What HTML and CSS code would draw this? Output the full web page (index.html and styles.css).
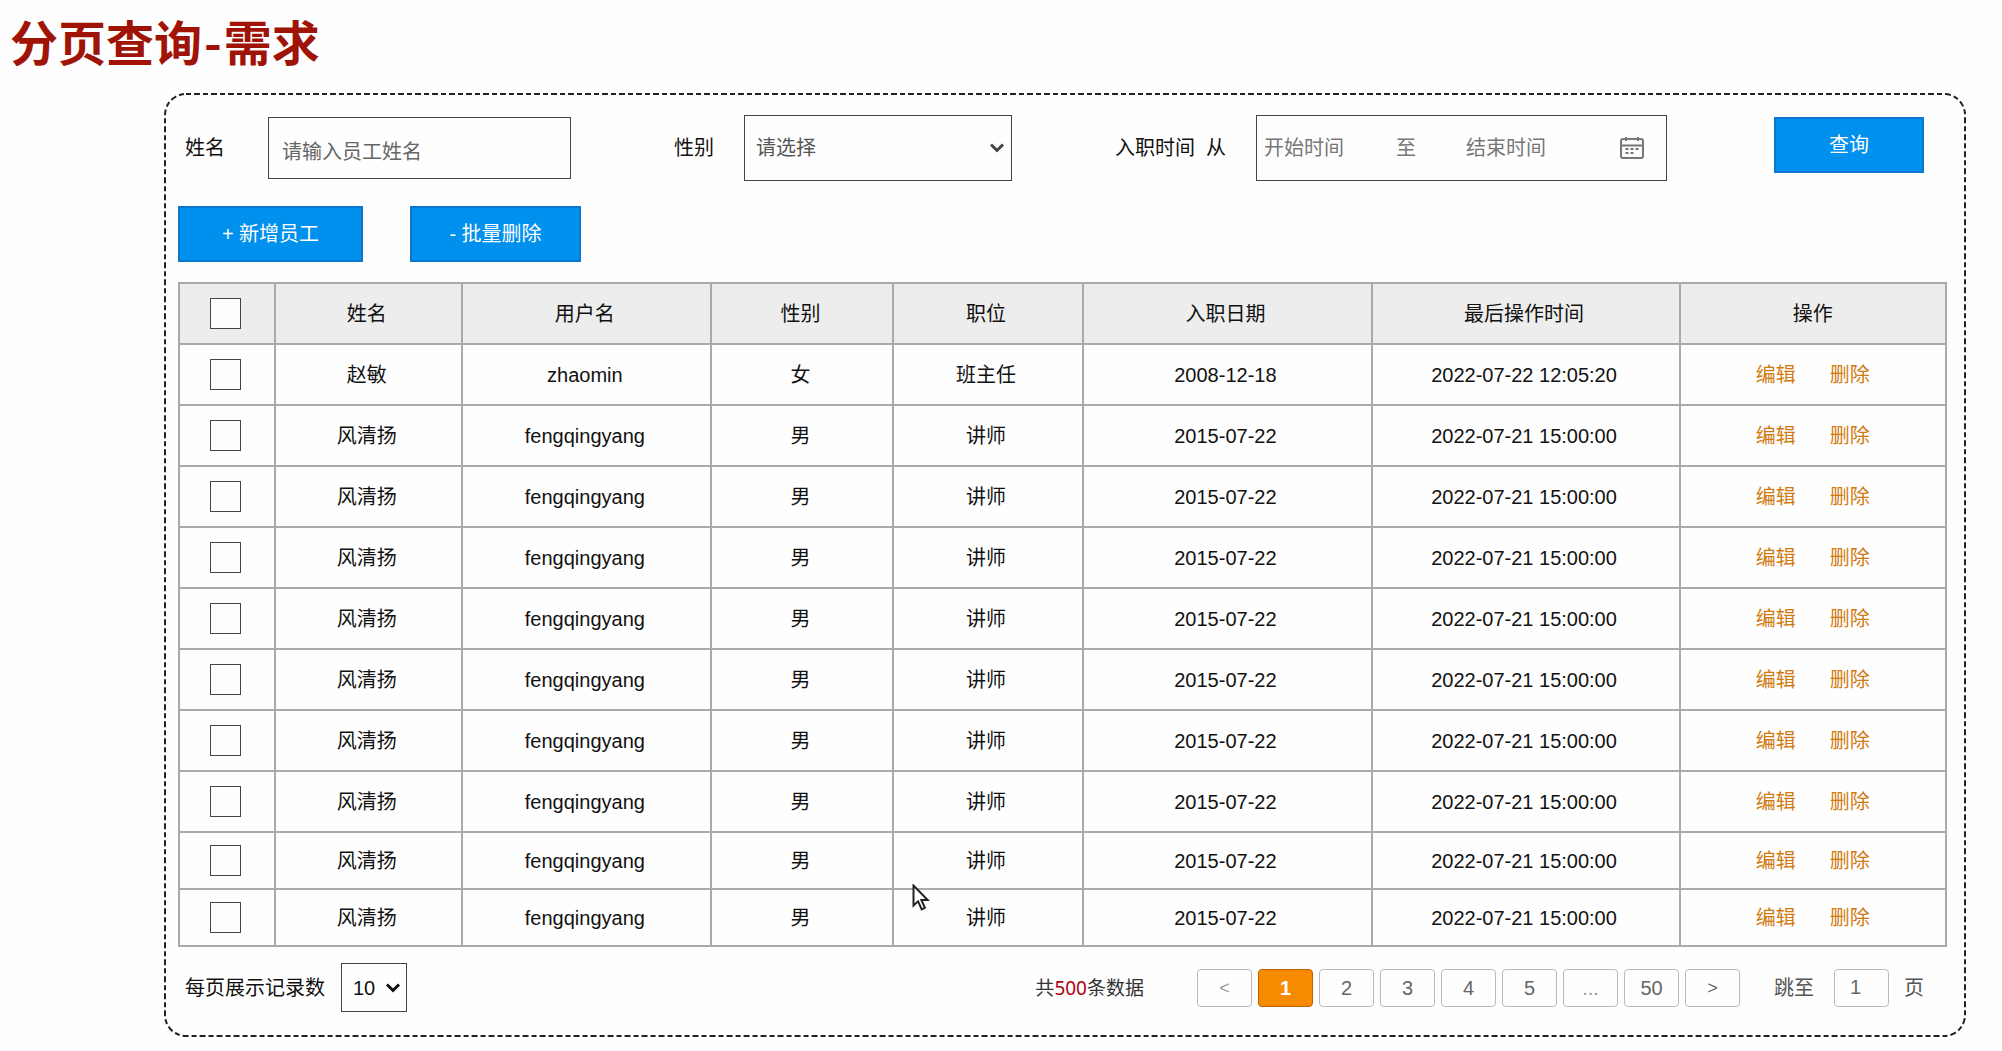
FILE: index.html
```html
<!DOCTYPE html>
<html lang="zh-CN">
<head>
<meta charset="utf-8">
<title>分页查询-需求</title>
<link rel="stylesheet" href="styles.css">
</head>
<body>
<h1 class="page-title">分页查询<span class="dash">-</span>需求</h1>
<main class="panel">
  <svg class="frame" aria-hidden="true"><rect class="frame-line" width="100%" height="100%" rx="21"/></svg>

  <form class="filters">
    <div class="field">
      <label class="name-label" for="name">姓名</label>
      <input class="box name-input" id="name" type="text" placeholder="请输入员工姓名">
    </div>
    <div class="field">
      <label class="gender-label" for="gender">性别</label>
      <div class="select-wrap">
        <select class="box gender-select" id="gender"><option>请选择</option><option>男</option><option>女</option></select>
        <svg class="chevron" width="16" height="12" viewBox="0 0 16 12" aria-hidden="true"><path d="M2 2.5 8 8.5 14 2.5"/></svg>
      </div>
    </div>
    <div class="field">
      <label class="date-label" for="begin">入职时间&nbsp; 从</label>
      <div class="box date-range">
        <input class="date-input" id="begin" type="text" placeholder="开始时间">
        <label class="date-to" for="end">至</label>
        <input class="date-input" id="end" type="text" placeholder="结束时间">
        <svg class="calendar" width="26" height="24" viewBox="0 0 26 24" aria-hidden="true"><rect x="2" y="3" width="22" height="19" rx="2"/><path d="M2 9.500h22M7 1v4M19 1v4"/><path class="dots" d="M6.500 13h3M11.500 13h3M16.500 13h3M6.500 17h3M11.500 17h3"/></svg>
      </div>
    </div>
    <button class="btn search-btn" type="button">查询</button>
  </form>

  <div class="actions">
    <button class="btn add-btn" type="button">+ 新增员工</button>
    <button class="btn remove-btn" type="button">- 批量删除</button>
  </div>

  <table class="staff">
    <colgroup>
      <col class="c-check"><col class="c-name"><col class="c-user"><col class="c-gender"><col class="c-job"><col class="c-date"><col class="c-time"><col class="c-ops">
    </colgroup>
    <thead>
      <tr><th><input class="check" type="checkbox" aria-label="全选"></th><th>姓名</th><th>用户名</th><th>性别</th><th>职位</th><th>入职日期</th><th>最后操作时间</th><th>操作</th></tr>
    </thead>
    <tbody>
      <tr><td><input class="check" type="checkbox" aria-label="选择"></td><td>赵敏</td><td>zhaomin</td><td>女</td><td>班主任</td><td>2008-12-18</td><td>2022-07-22 12:05:20</td><td><a href="#">编辑</a><a href="#">删除</a></td></tr>
      <tr><td><input class="check" type="checkbox" aria-label="选择"></td><td>风清扬</td><td>fengqingyang</td><td>男</td><td>讲师</td><td>2015-07-22</td><td>2022-07-21 15:00:00</td><td><a href="#">编辑</a><a href="#">删除</a></td></tr>
      <tr><td><input class="check" type="checkbox" aria-label="选择"></td><td>风清扬</td><td>fengqingyang</td><td>男</td><td>讲师</td><td>2015-07-22</td><td>2022-07-21 15:00:00</td><td><a href="#">编辑</a><a href="#">删除</a></td></tr>
      <tr><td><input class="check" type="checkbox" aria-label="选择"></td><td>风清扬</td><td>fengqingyang</td><td>男</td><td>讲师</td><td>2015-07-22</td><td>2022-07-21 15:00:00</td><td><a href="#">编辑</a><a href="#">删除</a></td></tr>
      <tr><td><input class="check" type="checkbox" aria-label="选择"></td><td>风清扬</td><td>fengqingyang</td><td>男</td><td>讲师</td><td>2015-07-22</td><td>2022-07-21 15:00:00</td><td><a href="#">编辑</a><a href="#">删除</a></td></tr>
      <tr><td><input class="check" type="checkbox" aria-label="选择"></td><td>风清扬</td><td>fengqingyang</td><td>男</td><td>讲师</td><td>2015-07-22</td><td>2022-07-21 15:00:00</td><td><a href="#">编辑</a><a href="#">删除</a></td></tr>
      <tr><td><input class="check" type="checkbox" aria-label="选择"></td><td>风清扬</td><td>fengqingyang</td><td>男</td><td>讲师</td><td>2015-07-22</td><td>2022-07-21 15:00:00</td><td><a href="#">编辑</a><a href="#">删除</a></td></tr>
      <tr><td><input class="check" type="checkbox" aria-label="选择"></td><td>风清扬</td><td>fengqingyang</td><td>男</td><td>讲师</td><td>2015-07-22</td><td>2022-07-21 15:00:00</td><td><a href="#">编辑</a><a href="#">删除</a></td></tr>
      <tr class="short"><td><input class="check" type="checkbox" aria-label="选择"></td><td>风清扬</td><td>fengqingyang</td><td>男</td><td>讲师</td><td>2015-07-22</td><td>2022-07-21 15:00:00</td><td><a href="#">编辑</a><a href="#">删除</a></td></tr>
      <tr class="short"><td><input class="check" type="checkbox" aria-label="选择"></td><td>风清扬</td><td>fengqingyang</td><td>男</td><td>讲师</td><td>2015-07-22</td><td>2022-07-21 15:00:00</td><td><a href="#">编辑</a><a href="#">删除</a></td></tr>
    </tbody>
  </table>

  <footer class="footer">
    <label for="size">每页展示记录数</label>
    <div class="select-wrap size-wrap">
      <select class="box size-select" id="size"><option>10</option><option>20</option><option>50</option></select>
      <svg class="chevron dark" width="16" height="12" viewBox="0 0 16 12" aria-hidden="true"><path d="M2 2.500 8 8.500 14 2.500"/></svg>
    </div>
    <p class="total">共<span class="count">500</span>条数据</p>
    <nav class="pages" aria-label="分页">
      <button class="page arrow" type="button" disabled>&lt;</button>
      <button class="page current" type="button">1</button>
      <button class="page" type="button">2</button>
      <button class="page" type="button">3</button>
      <button class="page" type="button">4</button>
      <button class="page" type="button">5</button>
      <button class="page more" type="button">...</button>
      <button class="page" type="button">50</button>
      <button class="page next" type="button">&gt;</button>
    </nav>
    <div class="jump">
      <label for="jump">跳至</label>
      <input class="page jump-input" id="jump" type="text" value="1">
      <span>页</span>
    </div>
  </footer>

  <svg class="pointer" width="18" height="27" viewBox="0 0 18 27" aria-hidden="true"><path d="M1.500 1.500v20l4.600-4.200 3.600 8 3.200-1.500-3.500-7.700h6.300z"/></svg>
</main>
</body>
</html>
```
FILE: styles.css
```css
* {
  box-sizing: border-box;
}

body {
  margin: 0;
  background: #fefefe;
  color: #111;
  font: 20px/24px "Liberation Sans", "Noto Sans CJK SC", sans-serif;
}

input,
select,
button {
  font: inherit;
  color: inherit;
}

.page-title {
  margin: 0;
  padding: 5px 10px 0;
  color: #a01408;
  font: 700 48px/70px "Noto Sans CJK SC", sans-serif;
}

.dash {
  margin: 0 2px;
}

/* panel */
.panel {
  position: relative;
  margin: 19px 37px 15px 165px;
  padding: 21px 18px 24px 13px;
}

.frame {
  position: absolute;
  inset: 0;
  width: 100%;
  height: 100%;
  overflow: visible;
  pointer-events: none;
}

.frame-line {
  fill: none;
  stroke: #222;
  stroke-width: 2;
  stroke-dasharray: 5 3 6 3;
}

/* filter row */
.filters {
  display: flex;
  justify-content: space-between;
  align-items: center;
  padding: 0 23px 0 7px;
}

.field {
  display: flex;
  align-items: center;
  white-space: pre;
}

.box {
  border: 1px solid #444;
  border-radius: 0;
  background: #fefefe;
}

.name-label {
  margin-right: 43px;
}

.gender-label {
  margin-right: 30px;
}

.date-label {
  margin-right: 30px;
}

.name-input {
  width: 303px;
  height: 62px;
  padding: 8px 13px 0;
}

::placeholder {
  color: #666;
  opacity: 1;
}

.select-wrap {
  display: grid;
  align-items: center;
}

.select-wrap > * {
  grid-area: 1 / 1;
}

.gender-select {
  appearance: none;
  width: 268px;
  height: 66px;
  padding: 0 11px;
  color: #555;
}

.chevron {
  justify-self: end;
  margin-right: 7px;
  pointer-events: none;
}

.chevron path {
  fill: none;
  stroke: #444;
  stroke-width: 3;
}

.chevron.dark path {
  stroke: #111;
}

.date-range {
  display: flex;
  align-items: center;
  width: 411px;
  height: 66px;
  margin-right: 4px;
  padding: 0 21px 0 7px;
  color: #777;
}

.date-input {
  width: 84px;
  padding: 0;
  border: 0;
  background: none;
}

.date-input::placeholder {
  color: #777;
}

.date-to {
  margin: 0 50px 0 48px;
}

.calendar {
  margin-left: auto;
  fill: none;
  stroke: #777;
  stroke-width: 2;
}

/* buttons */
.btn {
  height: 56px;
  padding: 0;
  border: 2px solid #0a78cc;
  background: #0090ee;
  color: #fff;
}

.search-btn {
  align-self: flex-start;
  width: 150px;
  margin-top: 2px;
}

.actions {
  display: flex;
  gap: 47px;
  margin: 25px 0 20px;
}

.add-btn {
  width: 185px;
}

.remove-btn {
  width: 171px;
}

/* table */
.staff {
  width: 100%;
  table-layout: fixed;
  border-collapse: collapse;
  text-align: center;
}

.c-check { width: 96px; }
.c-name { width: 10.6%; }
.c-user { width: 14.1%; }
.c-gender { width: 10.3%; }
.c-job { width: 10.7%; }
.c-date { width: 16.4%; }
.c-time { width: 17.4%; }

.staff tr {
  height: 61px;
}

.staff .short {
  height: 57px;
}

.staff th,
.staff td {
  padding: 0 4px 0 0;
  border: 2px solid #aaa;
  font-weight: 400;
}

.staff th {
  background: #ededed;
}

.staff th:last-child,
.staff td:last-child {
  padding-right: 0;
}

.staff a {
  color: #d17a10;
  text-decoration: none;
}

.staff a + a {
  margin-left: 34px;
}

.check {
  appearance: none;
  display: block;
  width: 31px;
  height: 31px;
  margin: 0 auto;
  border: 1px solid #444;
  background: #fefefe;
}

/* footer */
.footer {
  display: flex;
  align-items: center;
  margin-top: 16px;
  padding: 0 23px 0 7px;
}

.size-wrap {
  margin-left: 16px;
}

.size-select {
  appearance: none;
  width: 66px;
  height: 49px;
  padding: 0 11px;
}

.size-wrap .chevron {
  margin-right: 6px;
}

.total {
  margin: 0 53px 0 auto;
  color: #333;
  font: 19px/24px "Noto Sans", "Noto Sans CJK SC", sans-serif;
}

.count {
  color: #b00010;
}

.pages {
  display: flex;
  gap: 6px;
}

.page {
  width: 55px;
  height: 38px;
  padding: 0;
  border: 1px solid #bbb;
  border-radius: 4px;
  background: #fefefe;
  color: #666;
}

.page.current {
  border-color: #c06000;
  background: #f78a00;
  color: #fff;
  font-weight: 700;
}

.arrow,
.more {
  color: #999;
}

.arrow,
.next {
  font-size: 18px;
}

.jump {
  display: flex;
  align-items: center;
  margin-left: 34px;
  color: #555;
}

.jump-input {
  margin: 0 15px 0 20px;
  padding-left: 15px;
}

/* mouse pointer over the table */
.pointer {
  position: absolute;
  left: 747px;
  bottom: 125px;
  fill: #fff;
  stroke: #222;
  stroke-width: 2;
}
```
